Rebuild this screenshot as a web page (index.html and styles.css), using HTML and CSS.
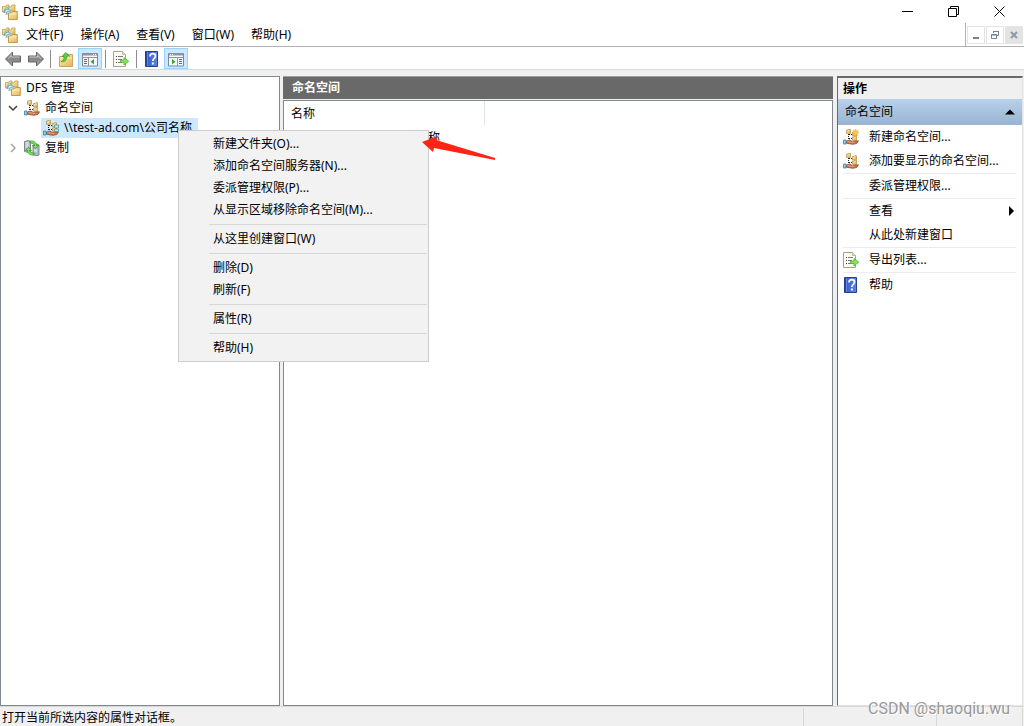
FILE: index.html
```html
<!DOCTYPE html>
<html lang="zh-CN">
<head>
<meta charset="utf-8">
<meta name="viewport" content="width=device-width, initial-scale=1">
<title>DFS 管理</title>
<link rel="stylesheet" href="styles.css">
</head>
<body>
<svg class="defs" aria-hidden="true">
  <defs>
    <linearGradient id="gold" x1="0" y1="0" x2="1" y2="1"><stop offset="0" stop-color="#fdf0b8"/><stop offset="1" stop-color="#e3b65a"/></linearGradient>
    <linearGradient id="blue" x1="0" y1="0" x2="1" y2="0"><stop offset="0" stop-color="#1d3a94"/><stop offset=".25" stop-color="#3d63c8"/><stop offset="1" stop-color="#6288e2"/></linearGradient>
    <linearGradient id="steel" x1="0" y1="0" x2="0" y2="1"><stop offset="0" stop-color="#c2c2c2"/><stop offset=".5" stop-color="#858585"/><stop offset="1" stop-color="#a8a8a8"/></linearGradient>
    <symbol id="dfs" viewBox="0 0 16 16">
      <path d="M.5 2.500h3l1-1.500h2.500v7h-6.500z" fill="url(#gold)" stroke="#c39a4e" stroke-width=".8"/>
      <path d="M6 3h3l1-2h3v6H6z" fill="url(#gold)" stroke="#c39a4e" stroke-width=".8"/>
      <path d="M3 9V4.500q1-1.500 3-.500l3 3-1 4-3-1" fill="#c9edf2" stroke="#78a8b4" stroke-width=".8"/>
      <path d="M2 9c0-3 2-4 5-4M4 11c0-3 2-4 4-4" fill="none" stroke="#5197a8" stroke-width=".8"/>
      <path d="M6.500 9h3l1-1.500h4.800v8H6.500z" fill="url(#gold)" stroke="#bd9040" stroke-width=".9"/>
      <path d="M7.500 10h7" stroke="#fff6cc" stroke-width=".8"/>
    </symbol>
    <symbol id="names" viewBox="0 0 16 16">
      <path d="M5.500 5v6M6 5.500h4M6 9.500h4" stroke="#222" stroke-dasharray="1 1" fill="none"/>
      <path d="M3.500 1h1.500l.5-.7h2v4h-4z" fill="url(#gold)" stroke="#b28a3d" stroke-width=".7"/>
      <path d="M9.500 3.500h1.500l.5-.7h2v4h-4z" fill="url(#gold)" stroke="#b28a3d" stroke-width=".7"/>
      <path d="M9.500 8h1.500l.5-.7h2v4h-4z" fill="url(#gold)" stroke="#b28a3d" stroke-width=".7"/>
      <path d="M3.500 12l3-1 3 1.500 2.500-.500 3.500-.200-1.500 2.500-4 1-6.500-1z" fill="#c8764b" stroke="#8f4c32" stroke-width=".8"/>
      <path d="M4.500 12.500l4 .8h3" stroke="#efb48c" stroke-width=".8" fill="none"/>
      <path d="M.5 11h2.500v4h-2.500z" fill="#94d1e9" stroke="#457e9d" stroke-width=".8"/>
    </symbol>
    <symbol id="root" viewBox="0 0 16 16">
      <use href="#names"/>
      <path d="M11.500 5h4v3h-4z" fill="#bce8f2" stroke="#5196a8" stroke-width=".8"/>
      <path d="M11.500 9h4v2.500h-4z" fill="#bce8f2" stroke="#5196a8" stroke-width=".8"/>
    </symbol>
    <symbol id="newnames" viewBox="0 0 16 16">
      <use href="#names"/>
      <path d="M12.500 0l.7 2 2-1-1 2 1.800.8-1.800.8 1 2-2-.9-.7 2.100-.7-2.100-2 .9 1-2L9 3.800l1.800-.8-1-2 2 1z" fill="#ffc83e" stroke="#e7a024" stroke-width=".4"/>
    </symbol>
    <symbol id="repl" viewBox="0 0 16 16">
      <path d="M.5 1.500l4-1 2 1v10l-2 1-4-1z" fill="#b3bbc4" stroke="#66717d" stroke-width=".8"/>
      <path d="M1.500 3h3M1.500 5h3M1.500 7h3" stroke="#f2f6f9"/>
      <path d="M9 5l4-1 2 1v10l-2 .8-4-1z" fill="#b3bbc4" stroke="#66717d" stroke-width=".8"/>
      <path d="M10 7h3M10 9h3M10 11h3" stroke="#f2f6f9"/>
      <path d="M6 1c4-.5 6.500 1.500 6.500 4.500h2l-3 3.500-3-3.500h2c0-1.500-1.500-2.500-4.500-2.500z" fill="#7fe35a" stroke="#29911f" stroke-width=".7"/>
      <path d="M10 15c-4 .5-6.500-1.500-6.500-4.500h-2l3-3.500 3 3.500h-2c0 1.500 1.500 2.500 4.500 2.500z" fill="#7fe35a" stroke="#29911f" stroke-width=".7"/>
    </symbol>
    <symbol id="export" viewBox="0 0 16 16">
      <path d="M.5.5h9l3 3v12h-12z" fill="#fffdf0" stroke="#a5a38f"/>
      <path d="M9.500.5v3h3" fill="#e5e2cc" stroke="#a5a38f" stroke-width=".7"/>
      <path d="M3 5.500h1M3 8.500h1M3 11.500h1" stroke="#444"/>
      <path d="M5 5.500h5M5 8.500h4M5 11.500h4" stroke="#77768b"/>
      <path d="M7.500 9H11v-2.500l4.700 3.700-4.700 3.800v-2.500H7.500z" fill="#8ae35a" stroke="#4aae32" stroke-width=".8"/>
    </symbol>
    <symbol id="help" viewBox="0 0 16 16">
      <path d="M1.500.5h12v15h-12z" fill="url(#blue)" stroke="#243e91"/>
      <path d="M3.500 1v14" stroke="#8da9ed" stroke-width=".6"/>
      <path d="M6 5.500c0-4 5.500-3.500 5.500-.5 0 2.500-2.700 2.500-2.700 5" fill="none" stroke="#fff" stroke-width="1.700"/>
      <path d="M7.900 11.500h1.900v2H7.900z" fill="#fff"/>
    </symbol>
    <symbol id="arrow" viewBox="0 0 16 16">
      <path d="M.5 8l7-7v4h8v6h-8v4z" fill="url(#steel)" stroke="#646464"/>
      <path d="M3 8l3.500-3.500V6h8" fill="none" stroke="#ccc" stroke-width=".8"/>
    </symbol>
    <symbol id="up" viewBox="0 0 16 16">
      <path d="M1.500 5.500h7l1-2h5v12h-13z" fill="url(#gold)" stroke="#c8a660"/>
      <path d="M2 7h12" stroke="#fff1b9"/>
      <path d="M3 10.500c2.500-.5 3-2.500 3-5H4L7.500 1.500l4 3.500H9c0 4-2.500 6.500-6 5.500z" fill="#5ccd3c" stroke="#259021" stroke-width=".6"/>
    </symbol>
    <symbol id="pane" viewBox="0 0 16 16">
      <path d="M.5 2.500h15v12.500H.5z" fill="#f5f7fb" stroke="#7d8798"/>
      <path d="M1 3.500h14" stroke="#8d97a8" stroke-width="2"/>
      <path d="M11 3.500h1M13 3.500h1" stroke="#fff"/>
      <path d="M1 6.500h14M6.500 7v8" stroke="#8d97a8"/>
      <path d="M2 8.500h3M2 10.500h3M2 12.500h3" stroke="#426dab"/>
      <path d="M12 8v5.500L8.500 10.700z" fill="#3ba635"/>
    </symbol>
  </defs>
</svg>

<div class="app">
  <header class="titlebar">
    <svg class="icon"><use href="#dfs"/></svg>
    <h1 class="title">DFS 管理</h1>
    <div class="window-controls">
      <button class="win-btn" aria-label="最小化"><svg class="glyph" viewBox="0 0 11 11"><path d="M0 5.500h11"/></svg></button>
      <button class="win-btn" aria-label="还原"><svg class="glyph" viewBox="0 0 11 11"><path d="M.5 2.500h8v8h-8zM2.500 2.500v-2h8v8h-2"/></svg></button>
      <button class="win-btn" aria-label="关闭"><svg class="glyph" viewBox="0 0 11 11"><path d="M.5.5l10 10M10.500.5l-10 10"/></svg></button>
    </div>
  </header>

  <nav class="menubar">
    <svg class="icon"><use href="#dfs"/></svg>
    <button class="menu-btn">文件(F)</button>
    <button class="menu-btn">操作(A)</button>
    <button class="menu-btn">查看(V)</button>
    <button class="menu-btn">窗口(W)</button>
    <button class="menu-btn">帮助(H)</button>
    <div class="child-controls">
      <button class="child-btn" aria-label="最小化子窗口"><svg class="child-glyph" viewBox="0 0 10 10"><path d="M2 8h6" stroke-width="2"/></svg></button>
      <button class="child-btn" aria-label="还原子窗口"><svg class="child-glyph" viewBox="0 0 10 10"><path d="M3.500 3V1.500h5v4H7M3 1.500h6M1.500 4.500h5v4h-5zM1 5h6"/></svg></button>
      <button class="child-btn child-close" aria-label="关闭子窗口"><svg class="child-glyph" viewBox="0 0 10 10"><path d="M2 2l6 6M8 2l-6 6" stroke-width="2"/></svg></button>
    </div>
  </nav>

  <div class="toolbar">
    <button class="tool" aria-label="后退"><svg class="icon"><use href="#arrow"/></svg></button>
    <button class="tool" aria-label="前进"><svg class="icon mirrored"><use href="#arrow"/></svg></button>
    <span class="tool-sep"></span>
    <button class="tool wide" aria-label="上一级"><svg class="icon"><use href="#up"/></svg></button>
    <button class="tool pressed" aria-label="显示/隐藏控制台树"><svg class="icon"><use href="#pane"/></svg></button>
    <span class="tool-sep"></span>
    <button class="tool wide" aria-label="导出列表"><svg class="icon"><use href="#export"/></svg></button>
    <span class="tool-sep"></span>
    <button class="tool wide" aria-label="帮助"><svg class="icon"><use href="#help"/></svg></button>
    <button class="tool pressed" aria-label="显示/隐藏操作窗格"><svg class="icon mirrored"><use href="#pane"/></svg></button>
  </div>

  <main class="workspace">
    <section class="tree" aria-label="控制台树">
      <div class="node"><svg class="icon"><use href="#dfs"/></svg><span class="label">DFS 管理</span></div>
      <div class="node branch">
        <button class="twisty open" aria-label="折叠"><svg class="chevron" viewBox="0 0 10 10"><path d="M1 3l4 4 4-4"/></svg></button>
        <svg class="icon"><use href="#names"/></svg><span class="label">命名空间</span>
      </div>
      <div class="node leaf"><span class="selected"><svg class="icon"><use href="#root"/></svg><span class="label">\\test-ad.com\公司名称</span></span></div>
      <div class="node branch">
        <button class="twisty" aria-label="展开"><svg class="chevron" viewBox="0 0 10 10"><path d="M3 1l4 4-4 4"/></svg></button>
        <svg class="icon"><use href="#repl"/></svg><span class="label">复制</span>
      </div>
    </section>

    <section class="content">
      <h2 class="content-title">命名空间</h2>
      <div class="list">
        <table class="grid">
          <thead><tr><th class="col-name">名称</th><th class="col-rest"></th></tr></thead>
          <tbody><tr><td class="cell" colspan="2"><span class="cell-row"><svg class="icon"><use href="#root"/></svg><span>\\test-ad.com\公司名称</span></span></td></tr></tbody>
        </table>
      </div>
    </section>

    <aside class="actions">
      <h2 class="actions-title">操作</h2>
      <button class="group">命名空间<svg class="tri" viewBox="0 0 10 10"><path d="M0 7.500l5-5 5 5z"/></svg></button>
      <button class="action"><svg class="icon"><use href="#newnames"/></svg>新建命名空间...</button>
      <button class="action"><svg class="icon"><use href="#names"/></svg>添加要显示的命名空间...</button>
      <hr class="action-sep">
      <button class="action"><span class="icon"></span>委派管理权限...</button>
      <hr class="action-sep">
      <button class="action"><span class="icon"></span>查看<svg class="tri" viewBox="0 0 10 10"><path d="M3 0l5 5-5 5z"/></svg></button>
      <button class="action"><span class="icon"></span>从此处新建窗口</button>
      <hr class="action-sep">
      <button class="action"><svg class="icon"><use href="#export"/></svg>导出列表...</button>
      <hr class="action-sep">
      <button class="action"><svg class="icon"><use href="#help"/></svg>帮助</button>
    </aside>
  </main>

  <footer class="status">
    <span class="status-text">打开当前所选内容的属性对话框。</span>
    <span class="status-cell"></span>
    <span class="status-cell last"></span>
  </footer>

  <div class="context-menu" role="menu">
    <button class="item" role="menuitem">新建文件夹(O)...</button>
    <button class="item" role="menuitem">添加命名空间服务器(N)...</button>
    <button class="item" role="menuitem">委派管理权限(P)...</button>
    <button class="item" role="menuitem">从显示区域移除命名空间(M)...</button>
    <hr class="item-sep">
    <button class="item" role="menuitem">从这里创建窗口(W)</button>
    <hr class="item-sep">
    <button class="item" role="menuitem">删除(D)</button>
    <button class="item" role="menuitem">刷新(F)</button>
    <hr class="item-sep">
    <button class="item" role="menuitem">属性(R)</button>
    <hr class="item-sep">
    <button class="item" role="menuitem">帮助(H)</button>
  </div>
  <svg class="pointer" viewBox="0 0 76 28" aria-hidden="true"><path d="M1 9L17 3l-2 4 59 18v2L13 15l-1 4z"/></svg>
  <span class="watermark">CSDN @shaoqiu.wu</span>
</div>
</body>
</html>
```
FILE: styles.css
```css
* { box-sizing: border-box; }

body {
  margin: 0;
  background: #fff;
  color: #000;
  font: 12px/20px "Noto Sans", "Noto Sans CJK SC", sans-serif;
}

button {
  margin: 0;
  padding: 0;
  border: 0;
  background: none;
  color: inherit;
  font: inherit;
  text-align: left;
  white-space: nowrap;
}

h1, h2 { margin: 0; font-size: 12px; font-weight: 400; }
hr { border: 0; height: 1px; }

.defs { position: absolute; width: 0; height: 0; }
.icon { flex: none; display: block; width: 16px; height: 16px; }
.mirrored { transform: scaleX(-1); }

.app {
  position: relative;
  display: flex;
  flex-direction: column;
  min-height: 100vh;
  overflow: hidden;
}

.titlebar { display: flex; align-items: center; height: 23px; padding-left: 2px; }
.title { margin-left: 5px; }
.window-controls { display: flex; margin-left: auto; padding-right: 2px; }
.win-btn { display: grid; place-items: center; width: 46px; height: 21px; }
.glyph { width: 11px; height: 11px; fill: none; stroke: #000; }

.menubar {
  display: flex;
  align-items: center;
  gap: 17px;
  height: 24px;
  padding-left: 2px;
  border-bottom: 1px solid #b0b0b4;
}
.menubar > .icon { margin-right: -9px; }
.child-controls {
  display: flex;
  align-items: center;
  align-self: stretch;
  gap: 1px;
  margin-left: auto;
  padding: 0 1px;
  border-left: 1px solid #b0b0b4;
}
.child-btn { display: grid; place-items: center; width: 18px; height: 18px; border: 1px solid #e3e3e3; }
.child-close { background: #e3e3e3; }
.child-glyph { width: 10px; height: 10px; fill: none; stroke: #728297; stroke-width: 1; }
.child-close .child-glyph { stroke: #8d9aaa; }

.toolbar {
  display: flex;
  align-items: center;
  height: 23px;
  padding: 1px 0 0 1px;
  border-bottom: 1px solid #d9d9d9;
}
.tool { display: grid; place-items: center; width: 23px; height: 21px; }
.tool.wide { width: 26px; }
.tool.pressed { width: 24px; border: 1px solid #99d1ff; background: #cce8ff; }
.tool-sep { width: 1px; height: 18px; margin: 0 1px 0 3px; background: #8d8d8d; }
.tool-sep + .wide { padding-left: 2px; }

.workspace {
  flex: 1;
  display: grid;
  grid-template-columns: 280px 1fr 187px;
  padding-top: 6px;
  background: #f0f0f0;
}

.tree { padding: 1px 4px; border: 1px solid #828790; background: #fff; }
.node { display: flex; align-items: center; height: 20px; }
.label { margin-left: 5px; }
.leaf { padding-left: 36px; }
.selected { display: flex; align-items: center; height: 20px; padding: 0 6px 0 2px; background: #cce8ff; }
.twisty { display: grid; place-items: center; width: 19px; height: 20px; padding-right: 4px; }
.chevron { width: 10px; height: 10px; fill: none; stroke: #a6a6a6; stroke-width: 1.500; }
.open .chevron { stroke: #404040; }

.content { display: flex; flex-direction: column; margin: 0 4px 0 3px; }
.content-title {
  height: 23px;
  padding-left: 9px;
  border-top: 1px solid #a0a0a0;
  background: #696969;
  color: #fff;
  font-weight: 700;
  line-height: 22px;
}
.list { flex: 1; margin-top: 1px; border: 1px solid #828790; background: #fff; }
.grid { width: 100%; border-collapse: collapse; table-layout: fixed; }
.grid th { height: 25px; padding: 0 7px; font-weight: 400; text-align: left; }
.grid .col-name { width: 200px; border-right: 1px solid #e5e5e5; }
.grid .cell { padding: 2px 4px 0; }
.cell-row { display: flex; align-items: center; gap: 8px; }

.actions {
  display: flex;
  flex-direction: column;
  margin-right: 1px;
  border: 1px solid #696969;
  border-top-width: 2px;
  border-right-color: #e3e3e3;
  border-bottom-color: #e3e3e3;
  background: #fff;
}
.actions-title { height: 21px; padding-left: 5px; background: #f0f0f0; font-weight: 700; line-height: 22px; }
.group {
  display: flex;
  align-items: center;
  height: 26px;
  padding: 0 7px;
  background: linear-gradient(#b9d1ea, #98b4d2);
}
.action { display: flex; align-items: center; gap: 10px; height: 24px; padding: 0 6px 0 5px; }
.action-sep { flex: none; width: auto; margin: 0 6px 0 5px; background: #ececec; }
.tri { width: 10px; height: 10px; margin-left: auto; fill: #000; }

.status {
  display: flex;
  height: 20px;
  border-top: 1px solid #d7d7d7;
  background: #f0f0f0;
}
.status-text { flex: 1; padding-left: 2px; line-height: 22px; }
.status-cell { width: 133px; margin-top: 1px; border-left: 1px solid #d7d7d7; }
.status-cell.last { width: 87px; margin-right: 1px; border-right: 1px solid #d7d7d7; }

.context-menu {
  position: absolute;
  left: 178px;
  top: 130px;
  display: flex;
  flex-direction: column;
  width: 251px;
  padding: 2px 1px;
  border: 1px solid #ccc;
  background: #f2f2f2;
}
.item { height: 22px; padding-left: 33px; }
.item-sep { flex: none; width: auto; margin: 3px 0 3px 29px; background: #d7d7d7; }

.pointer { position: absolute; left: 421px; top: 133px; width: 76px; height: 28px; fill: #ff2414; }
.watermark {
  position: absolute;
  right: 14px;
  bottom: 7px;
  color: #999;
  font-family: Roboto, sans-serif;
  font-size: 16px;
  text-shadow: 1px 1px 0 #fff;
}
```
